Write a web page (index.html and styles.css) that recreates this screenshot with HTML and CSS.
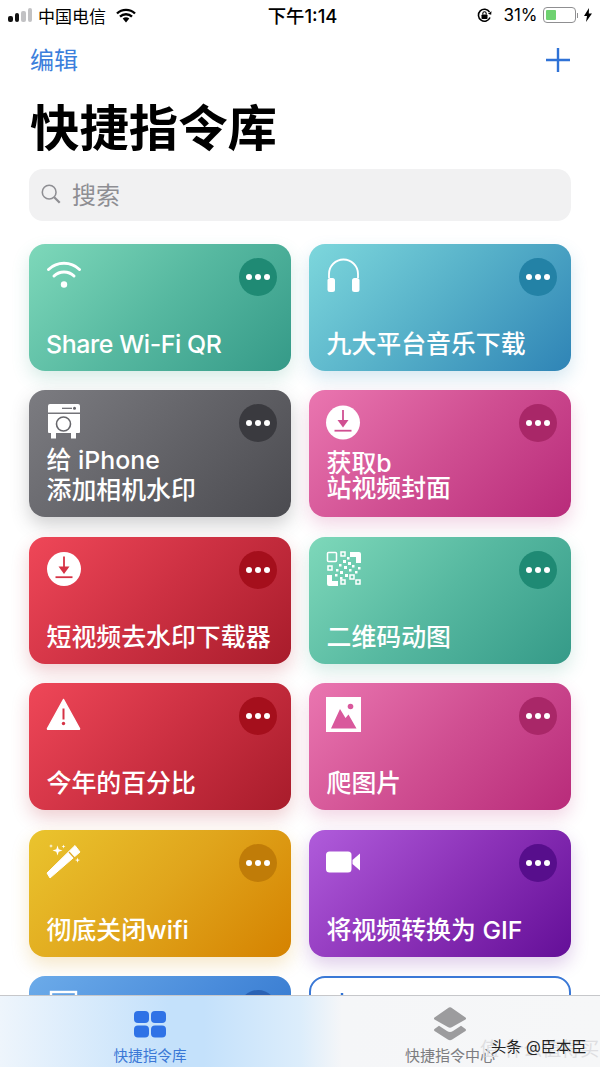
FILE: index.html
```html
<!DOCTYPE html>
<html lang="zh-CN">
<head>
    <meta charset="UTF-8">
    <meta name="viewport" content="width=device-width, initial-scale=1.0">
    <title>快捷指令库</title>
    <link rel="stylesheet" href="styles.css">
</head>
<body>
<div class="screen">
    <div class="status">
        <div class="status-left">
            <span class="signal"><i class="on h1"></i><i class="on h2"></i><i class="h3"></i><i class="h4"></i></span>
            <span class="carrier">中国电信</span>
            <svg class="status-wifi" width="20" height="15" viewBox="0 0 20 15"><path d="M1 5.500a13 13 0 0 1 18 0M4 8.600a8.800 8.800 0 0 1 12 0" fill="none" stroke="#000" stroke-width="2.400"/><path d="M6.700 10.600a5 5 0 0 1 6.600 0L10 14.500z" fill="#000"/></svg>
        </div>
        <div class="status-time">下午1:14</div>
        <div class="status-right">
            <svg class="status-lock" width="17" height="15" viewBox="0 0 17 15"><path d="M14 9.500A6 6 0 1 1 13.500 4" fill="none" stroke="#000" stroke-width="1.600"/><path d="M15.500 3.200l-.3 3.500-3.300-1z" fill="#000"/><rect x="5.500" y="6.500" width="6" height="4.500" rx=".8" fill="#000"/><path d="M6.800 6.500V5.500a1.700 1.700 0 0 1 3.400 0v1" fill="none" stroke="#000" stroke-width="1.100"/></svg>
            <span class="percent">31%</span>
            <span class="battery"><i></i></span>
            <span class="battery-nub"></span>
            <svg class="status-bolt" width="8" height="14" viewBox="0 0 8 14"><path d="M5 0L0 8h3l-1 6 6-8.500H4.800z" fill="#000"/></svg>
        </div>
    </div>

    <div class="nav">
        <a class="edit">编辑</a>
        <svg width="26" height="26" viewBox="0 0 26 26"><path d="M13 1v24M1 13h24" stroke="#2f72d6" stroke-width="2.400" fill="none"/></svg>
    </div>

    <h1 class="title">快捷指令库</h1>

    <div class="search">
        <svg width="22" height="22" viewBox="0 0 24 24"><circle cx="10" cy="10" r="7.500" fill="none" stroke="#8e8e93" stroke-width="1.700"/><path d="M15.500 15.500l6 6" stroke="#8e8e93" stroke-width="2.400" fill="none"/></svg>
        <span>搜索</span>
    </div>

    <div class="library">
        <div class="grid">
            <div class="card green">
                <div class="card-top">
                    <svg class="icon" width="36" height="36" viewBox="0 0 36 36"><path d="M2.500 11.500a22.500 22.500 0 0 1 31 0M8 18a14.500 14.500 0 0 1 20 0" fill="none" stroke="#fff" stroke-width="3" stroke-linecap="round"/><circle cx="18" cy="26.500" r="3.200" fill="#fff"/></svg>
                    <span class="more"></span>
                </div>
                <div class="name latin">Share Wi-Fi QR</div>
            </div>
            <div class="card teal">
                <div class="card-top">
                    <svg class="icon" width="36" height="36" viewBox="0 0 36 36"><path d="M3 20V16a14.500 14.500 0 0 1 29 0V20" fill="none" stroke="#fff" stroke-width="1.800"/><rect x="1.500" y="20" width="7.500" height="14" rx="2.500" fill="#fff"/><rect x="26" y="20" width="7.500" height="14" rx="2.500" fill="#fff"/></svg>
                    <span class="more"></span>
                </div>
                <div class="name">九大平台音乐下载</div>
            </div>
            <div class="card grey">
                <div class="card-top">
                    <svg class="icon" width="36" height="36" viewBox="0 0 36 36"><path d="M2 2a2 2 0 0 1 2-2h28a2 2 0 0 1 2 2v6.500H2z" fill="#fff"/><path d="M2 10h32v18a1 1 0 0 1-1 1H3a1 1 0 0 1-1-1z" fill="#fff"/><rect x="5" y="29" width="5" height="5.500" fill="#fff"/><rect x="25" y="29" width="5" height="5.500" fill="#fff"/><circle cx="17.500" cy="20" r="7" fill="none" stroke="#66666b" stroke-width="1.600"/><path d="M16 4.300h10" stroke="#66666b" stroke-width="1.200"/><circle cx="28.500" cy="4.300" r="1.500" fill="#66666b"/></svg>
                    <span class="more"></span>
                </div>
                <div class="name">给 iPhone<br>添加相机水印</div>
            </div>
            <div class="card pink">
                <div class="card-top">
                    <svg class="icon" width="36" height="36" viewBox="0 0 36 36"><circle cx="17" cy="18.500" r="17" fill="#fff"/><path d="M17 6v12" stroke="#d04f92" stroke-width="1.800"/><path d="M11.500 16h11L17 23.500z" fill="#d04f92"/><path d="M8.500 26.700h17" stroke="#d04f92" stroke-width="1.800"/></svg>
                    <span class="more"></span>
                </div>
                <div class="name tight">获取b<br>站视频封面</div>
            </div>
            <div class="card red">
                <div class="card-top">
                    <svg class="icon" width="36" height="36" viewBox="0 0 36 36"><circle cx="18" cy="18" r="17" fill="#fff"/><path d="M18 5.500v12" stroke="#d63345" stroke-width="1.800"/><path d="M12.500 15.500h11L18 23z" fill="#d63345"/><path d="M9.500 26.200h17" stroke="#d63345" stroke-width="1.800"/></svg>
                    <span class="more"></span>
                </div>
                <div class="name">短视频去水印下载器</div>
            </div>
            <div class="card green">
                <div class="card-top">
                    <svg class="icon" width="36" height="36" viewBox="0 0 36 36">
                        <g fill="none" stroke="#fff" stroke-width="1.500">
                            <rect x="1.500" y="1.500" width="9" height="9" rx="1"/>
                            <rect x="15" y="1" width="4" height="4"/>
                            <rect x="2" y="15" width="4" height="4"/>
                            <rect x="15" y="29" width="4" height="4"/>
                            <rect x="24" y="24" width="4" height="4"/>
                            <rect x="30" y="29" width="4" height="4"/>
                        </g>
                        <path d="M24 1h9a2 2 0 0 1 2 2v9h-5V6h-6zM1 24h5v6h6v5H3a2 2 0 0 1-2-2z" fill="#fff"/>
                        <g fill="#fff">
                            <rect x="21" y="6" width="2.500" height="2.500"/><rect x="17" y="9" width="3" height="3"/><rect x="22" y="11" width="3" height="3"/><rect x="13" y="13" width="2.500" height="2.500"/><rect x="18" y="15" width="3" height="3"/><rect x="26" y="14" width="2.500" height="2.500"/><rect x="32" y="16" width="2.500" height="2.500"/><rect x="10" y="18" width="2.500" height="2.500"/><rect x="23" y="18" width="2.500" height="2.500"/><rect x="14" y="20" width="3" height="3"/><rect x="29" y="20" width="2.500" height="2.500"/><rect x="19" y="23" width="3" height="3"/><rect x="9" y="23" width="2.500" height="2.500"/><rect x="14" y="26" width="2.500" height="2.500"/>
                        </g>
                    </svg>
                    <span class="more"></span>
                </div>
                <div class="name">二维码动图</div>
            </div>
            <div class="card red">
                <div class="card-top">
                    <svg class="icon" width="36" height="36" viewBox="0 0 36 36"><path d="M17.500 2.500L33.500 31.500a.6.600 0 0 1-.5.8H2a.6.600 0 0 1-.5-.8z" fill="#fff" stroke="#fff" stroke-width="1.500" stroke-linejoin="round"/><path d="M17.500 11.500v11" stroke="#d63345" stroke-width="2"/><circle cx="17.500" cy="26.500" r="1.700" fill="#d63345"/></svg>
                    <span class="more"></span>
                </div>
                <div class="name">今年的百分比</div>
            </div>
            <div class="card pink">
                <div class="card-top">
                    <svg class="icon" width="36" height="36" viewBox="0 0 36 36"><rect x="0" y="0" width="35" height="35" fill="#fff"/><path d="M5 31.500L14 12l5.500 9 3-3.500L30.500 31.500z" fill="#d9589c"/><circle cx="24.500" cy="9.500" r="2.800" fill="#d9589c"/></svg>
                    <span class="more"></span>
                </div>
                <div class="name">爬图片</div>
            </div>
            <div class="card yellow">
                <div class="card-top">
                    <svg class="icon" width="36" height="36" viewBox="0 0 36 36"><path d="M1 29L29 1.500 34 8 4 34z" fill="#fff" stroke="#fff" stroke-width="1" stroke-linejoin="round"/><path d="M23 8l5.500 6" stroke="#e0a820" stroke-width="1.200"/><path d="M11.500 1.500l1.200 3.800 3.800 1.200-3.800 1.200-1.200 3.800-1.200-3.800-3.800-1.200 3.800-1.200zM5 0l.5 1.500 1.500.5-1.500.5L5 4l-.5-1.500L3 2l1.500-.5zM17.500 .5l.5 1.500 1.500.5-1.500.5-.5 1.500-.5-1.500-1.500-.5 1.500-.5zM31.500 13.500l.6 2 2 .6-2 .6-.6 2-.6-2-2-.6 2-.6z" fill="#fff"/></svg>
                    <span class="more"></span>
                </div>
                <div class="name">彻底关闭wifi</div>
            </div>
            <div class="card purple">
                <div class="card-top">
                    <svg class="icon" width="36" height="36" viewBox="0 0 36 36"><rect x="0" y="7.500" width="25.500" height="21" rx="3.500" fill="#fff"/><path d="M26.500 16L34 9.500v17L26.500 20z" fill="#fff"/></svg>
                    <span class="more"></span>
                </div>
                <div class="name">将视频转换为 GIF</div>
            </div>
            <div class="card blue">
                <div class="card-top">
                    <svg class="icon" width="36" height="36" viewBox="0 0 36 36"><rect x="5" y="2" width="25" height="32" fill="none" stroke="#fff" stroke-width="2.400"/></svg>
                    <span class="more"></span>
                </div>
            </div>
            <div class="card add">
                <svg class="add-plus" width="28" height="28" viewBox="0 0 28 28"><path d="M14 1v26M1 14h26" stroke="#2f72d6" stroke-width="2.400" fill="none"/></svg>
            </div>
        </div>
    </div>

    <div class="tabbar">
        <div class="tab active">
            <svg width="34" height="30" viewBox="0 0 34 30"><rect x="1" y="2" width="15" height="12" rx="4" fill="#2f72e6"/><rect x="18" y="2" width="15" height="12" rx="4" fill="#2f72e6"/><rect x="1" y="16.500" width="15" height="12" rx="4" fill="#2f72e6"/><rect x="18" y="16.500" width="15" height="12" rx="4" fill="#2f72e6"/></svg>
            <span>快捷指令库</span>
        </div>
        <div class="tab">
            <svg width="34" height="34" viewBox="0 0 34 34"><path d="M14.800 1.200a3.500 3.500 0 0 1 4.400 0l13.300 9.300a1.300 1.300 0 0 1 0 2L19.200 20a4 4 0 0 1-4.400 0L1.500 12.500a1.300 1.300 0 0 1 0-2z" fill="#9c9c9e"/><path d="M6 18.800L14 24a5.500 5.500 0 0 0 6 0l8-5.200 4.500 3.100a1.300 1.300 0 0 1 0 2l-13.300 8.600a4 4 0 0 1-4.400 0L1.500 23.900a1.300 1.300 0 0 1 0-2z" fill="#9c9c9e"/></svg>
            <span>快捷指令中心</span>
        </div>
    </div>

    <div class="mark-faint">值 什么值得买</div>
    <div class="mark">头条 @臣本臣</div>
</div>
</body>
</html>
```

FILE: styles.css
```css
* {
    box-sizing: border-box;
}

body {
    margin: 0;
    background: #fff;
    font-family: Inter, "Noto Sans CJK SC", sans-serif;
    color: #000;
}

.screen {
    position: relative;
    width: 600px;
    height: 1067px;
    overflow: hidden;
    display: flex;
    flex-direction: column;
    background: #fff;
}

/* status bar */
.status {
    display: grid;
    grid-template-columns: 1fr auto 1fr;
    align-items: center;
    height: 30px;
    padding: 0 8px;
    font-size: 16px;
}

.status-left,
.status-right {
    display: flex;
    align-items: center;
}

.status-right {
    justify-content: flex-end;
}

.signal {
    display: flex;
    align-items: flex-end;
    gap: 2px;
    height: 14px;
}

.signal i {
    width: 4.500px;
    border-radius: 2px;
    background: #c2c2c4;
}

.signal i.on {
    background: #111;
}

.signal .h1 { height: 6px; }
.signal .h2 { height: 9px; }
.signal .h3 { height: 11px; }
.signal .h4 { height: 14px; }

.carrier {
    margin-left: 6px;
    font-size: 17px;
}

.status-wifi {
    margin-left: 10px;
}

.status-time {
    margin-left: 5px;
    font-size: 18.400px;
    font-weight: 500;
}

.percent {
    margin-left: 10px;
    font-size: 17px;
}

.battery {
    display: block;
    width: 33px;
    height: 16px;
    margin-left: 5px;
    padding: 2px;
    border: 1px solid #8f8f91;
    border-radius: 4px;
}

.battery i {
    display: block;
    width: 10px;
    height: 100%;
    background: #6fd271;
    border-radius: 1px;
}

.battery-nub {
    width: 1.500px;
    height: 5px;
    margin-left: 1px;
    background: #8f8f91;
}

.status-bolt {
    margin-left: 6px;
}

/* header */
.nav {
    display: flex;
    justify-content: space-between;
    align-items: center;
    height: 60px;
    padding: 0 29px 0 30px;
}

.edit {
    margin-top: -4px;
    font-size: 24px;
    color: #3c7fdc;
}

.title {
    height: 79px;
    margin: 0;
    padding-left: 30px;
    font-size: 49.400px;
    line-height: 76px;
    font-weight: 700;
}

.search {
    display: flex;
    align-items: center;
    gap: 10px;
    height: 52px;
    margin: 0 29px;
    padding: 0 0 3px 11px;
    border-radius: 14px;
    background: #f1f1f2;
    font-size: 24px;
    color: #8e8e93;
}

/* card grid */
.library {
    flex: 1;
    min-height: 0;
    overflow: hidden;
    padding: 23px 29px 0;
}

.grid {
    display: grid;
    grid-template-columns: 262px 262px;
    grid-auto-rows: 127px;
    column-gap: 18px;
    row-gap: 19.400px;
}

.card {
    display: flex;
    flex-direction: column;
    justify-content: space-between;
    padding: 14px 14px 12px 17px;
    border-radius: 16px;
    color: #fff;
}

.card-top {
    display: flex;
    justify-content: space-between;
    align-items: flex-start;
}

.more {
    position: relative;
    width: 38px;
    height: 38px;
    border-radius: 50%;
}

.more::before {
    content: "";
    position: absolute;
    left: 16px;
    top: 16px;
    width: 6px;
    height: 6px;
    border-radius: 50%;
    background: #fff;
    box-shadow: -9px 0 0 #fff, 9px 0 0 #fff;
}

.name {
    margin-left: .5px;
    font-size: 24.900px;
    font-weight: 500;
    line-height: 30px;
    white-space: nowrap;
}

.name.latin {
    margin-left: 0;
    letter-spacing: -.4px;
}

.name.tight {
    margin-bottom: 4px;
    line-height: 25px;
}

.green {
    background: linear-gradient(135deg, #7ed8ba 0%, #56b8a0 50%, #359a88 100%);
    box-shadow: 0 8px 18px rgba(60, 160, 135, .2);
}
.green .more { background: #1f8a74; }

.teal {
    background: linear-gradient(135deg, #7dd7dc 0%, #55afc8 50%, #2f84b6 100%);
    box-shadow: 0 8px 18px rgba(50, 140, 185, .2);
}
.teal .more { background: #2382a6; }

.grey {
    background: linear-gradient(135deg, #7c7c81 0%, #636368 50%, #4b4b50 100%);
    box-shadow: 0 8px 18px rgba(70, 70, 75, .25);
}
.grey .more { background: #3a3a3f; }

.pink {
    background: linear-gradient(135deg, #ea76b0 0%, #d04f92 50%, #b82b7a 100%);
    box-shadow: 0 8px 18px rgba(190, 50, 125, .2);
}
.pink .more { background: #a92768; }

.red {
    background: linear-gradient(135deg, #ef4758 0%, #cc3042 50%, #a81c2b 100%);
    box-shadow: 0 8px 18px rgba(180, 35, 50, .22);
}
.red .more { background: #a50f1c; }

.yellow {
    background: linear-gradient(135deg, #eac42e 0%, #e0a51c 50%, #d58200 100%);
    box-shadow: 0 8px 18px rgba(215, 150, 20, .22);
}
.yellow .more { background: #c07c08; }

.purple {
    background: linear-gradient(135deg, #b05cdb 0%, #8c32b8 50%, #640f98 100%);
    box-shadow: 0 8px 18px rgba(110, 30, 160, .22);
}
.purple .more { background: #570e8c; }

.blue {
    background: linear-gradient(135deg, #6cabe9 0%, #4a8cdb 50%, #2a6fc8 100%);
}
.blue .more { background: #2a62b4; }

.add {
    padding: 14px 17px;
    border: 2px solid #3a78d6;
    background: #fff;
}

/* tab bar */
.tabbar {
    display: grid;
    grid-template-columns: 1fr 1fr;
    height: 72px;
    border-top: 1px solid #c6c7ca;
    background: linear-gradient(90deg, #eef5fc 0%, #c4e1fb 28%, #c4e1fb 34%, #dcedfb 50%, #f5f6f8 57%, #f6f7f8 100%);
}

.tab {
    display: flex;
    flex-direction: column;
    align-items: center;
    font-size: 15px;
    color: #7c7c80;
}

.tab svg {
    margin-top: 11px;
    height: 34px;
}

.tab span {
    margin-top: 5px;
    line-height: 20px;
}

.tab.active {
    font-size: 14.600px;
    color: #3a78d6;
}

.tab.active svg {
    margin-top: 13px;
    height: 30px;
    margin-bottom: 2px;
}

/* watermark over the picture */
.mark,
.mark-faint {
    position: absolute;
    white-space: nowrap;
}

.mark {
    left: 491px;
    top: 1036px;
    font-size: 15.300px;
    line-height: 22px;
    color: #222;
}

.mark-faint {
    left: 480px;
    top: 1037px;
    font-size: 19px;
    line-height: 26px;
    color: #dedee1;
}
```
